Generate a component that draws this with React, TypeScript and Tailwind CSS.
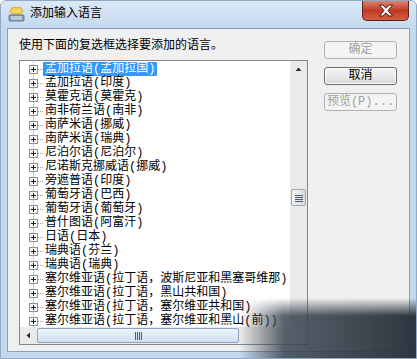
import React from "react"

const items = [
  "孟加拉语(孟加拉国)",
  "孟加拉语(印度)",
  "莫霍克语(莫霍克)",
  "南非荷兰语(南非)",
  "南萨米语(挪威)",
  "南萨米语(瑞典)",
  "尼泊尔语(尼泊尔)",
  "尼诺斯克挪威语(挪威)",
  "旁遮普语(印度)",
  "葡萄牙语(巴西)",
  "葡萄牙语(葡萄牙)",
  "普什图语(阿富汗)",
  "日语(日本)",
  "瑞典语(芬兰)",
  "瑞典语(瑞典)",
  "塞尔维亚语(拉丁语，波斯尼亚和黑塞哥维那)",
  "塞尔维亚语(拉丁语，黑山共和国)",
  "塞尔维亚语(拉丁语，塞尔维亚共和国)",
  "塞尔维亚语(拉丁语，塞尔维亚和黑山(前))"
]

const font = "font-['Liberation_Mono','Noto_Sans_CJK_SC',sans-serif]"

const TreeLines = () => (
  <svg width="23" height="14" className="shrink-0">
    <line x1="13.5" y1="0" x2="13.5" y2="14" stroke="#a0a0a0" strokeDasharray="1 1" />
    <line x1="18" y1="7.5" x2="23" y2="7.5" stroke="#a0a0a0" strokeDasharray="1 1" />
    <rect x="9.5" y="3.5" width="8" height="8" fill="#f7f7f7" stroke="#919191" />
    <line x1="11" y1="7.5" x2="16" y2="7.5" stroke="#1e1e1e" />
    <line x1="13.5" y1="5" x2="13.5" y2="10" stroke="#1e1e1e" />
  </svg>
)

const TitleIcon = () => (
  <svg width="17" height="16" viewBox="0 0 17 16">
    <path d="M3 3 Q6 0 9 2 Q13 0 14 4 Q16 6 13 8 L5 8 Q1 7 3 3 Z" fill="#f7d35a" stroke="#c79a1f" strokeWidth="0.8" />
    <rect x="1" y="9" width="15" height="6" rx="1" fill="#8aa2bd" stroke="#4d6582" strokeWidth="0.8" />
    <rect x="3" y="10.5" width="11" height="1" fill="#e5edf6" />
    <rect x="3" y="12.5" width="11" height="1" fill="#e5edf6" />
  </svg>
)

const CloseButton = () => (
  <div className="mr-[7px] flex h-[20px] w-[47px] items-center justify-center self-start rounded-b-[5px] border border-t-0 border-[#5e241c] bg-gradient-to-b from-[#d98470] via-[#c03822] to-[#d0603f]">
    <svg width="16" height="13" viewBox="0 0 16 13">
      <path
        d="M1.5 1 L5 1 L8 4.2 L11 1 L14.5 1 L10 6.5 L14.5 12 L11 12 L8 8.8 L5 12 L1.5 12 L6 6.5 Z"
        fill="#ffffff"
        stroke="#4e1b14"
        strokeWidth="1"
      />
    </svg>
  </div>
)

const Arrow = ({ dir }: { dir: "up" | "left" }) => (
  <svg width="7" height="7" viewBox="0 0 7 7">
    {dir === "up" ? <path d="M0.5 5 L3.5 1.5 L6.5 5 Z" fill="#2b2b2b" /> : <path d="M5 0.5 L1.5 3.5 L5 6.5 Z" fill="#2b2b2b" />}
  </svg>
)

const VGrip = () => (
  <svg width="8" height="8" viewBox="0 0 8 8">
    <line x1="0" y1="1.5" x2="8" y2="1.5" stroke="#4c5b6e" />
    <line x1="0" y1="3.5" x2="8" y2="3.5" stroke="#4c5b6e" />
    <line x1="0" y1="5.5" x2="8" y2="5.5" stroke="#4c5b6e" />
    <line x1="0" y1="7.5" x2="8" y2="7.5" stroke="#4c5b6e" />
  </svg>
)

const HGrip = () => (
  <svg width="8" height="8" viewBox="0 0 8 8">
    <line x1="1.5" y1="0" x2="1.5" y2="8" stroke="#4c5b6e" />
    <line x1="3.5" y1="0" x2="3.5" y2="8" stroke="#4c5b6e" />
    <line x1="5.5" y1="0" x2="5.5" y2="8" stroke="#4c5b6e" />
    <line x1="7.5" y1="0" x2="7.5" y2="8" stroke="#4c5b6e" />
  </svg>
)

const App: React.FC = () => {
  return (
    <div className={`relative flex h-[359px] w-[417px] flex-col overflow-hidden rounded-t-[6px] border border-[#8fa9c6] bg-[#c4d8ee] text-[12px] ${font}`}>
      {/* title bar */}
      <div className="flex h-[27px] shrink-0 items-start justify-between bg-gradient-to-b from-[#dbe8f6] to-[#c4d8ee]">
        <div className="flex items-center gap-[5px] pl-[7px] pt-[5px]">
          <TitleIcon />
          <span className="text-[12px] leading-[16px] text-black">添加输入语言</span>
        </div>
        <CloseButton />
      </div>

      {/* client area */}
      <div className="mx-[6px] mb-[6px] flex flex-1 border border-[#8d9fb4] bg-[#f0f0f0]">
        <div className="flex flex-col pl-[11px] pt-[10px]">
          <div className="h-[14px] leading-[14px] text-black">使用下面的复选框选择要添加的语言。</div>
          <div className="mt-[7px] flex h-[285px] w-[289px] flex-col border border-[#828790] bg-white">
            <div className="flex min-h-0 flex-1">
              <div className="flex min-w-0 flex-1 flex-col overflow-hidden pt-[1px]">
                {items.map((item, i) => (
                  <div key={item} className="flex h-[14px] shrink-0 items-center whitespace-nowrap">
                    <TreeLines />
                    <span
                      className={
                        i === 0
                          ? "bg-[#3399ff] px-[2px] leading-[14px] text-white"
                          : "px-[2px] leading-[14px] text-black"
                      }
                    >
                      {item}
                    </span>
                  </div>
                ))}
              </div>
              {/* vertical scrollbar */}
              <div className="flex w-[17px] shrink-0 flex-col bg-[#eaeaea]">
                <div className="flex h-[17px] items-center justify-center">
                  <Arrow dir="up" />
                </div>
                <div className="h-[111px]" />
                <div className="mx-[1px] flex h-[17px] items-center justify-center rounded-[2px] border border-[#9aa8b8] bg-gradient-to-r from-[#f3f3f3] to-[#dcdcdc]">
                  <VGrip />
                </div>
              </div>
            </div>
            {/* horizontal scrollbar */}
            <div className="flex h-[17px] shrink-0">
              <div className="flex flex-1 items-center bg-[#eaeaea]">
                <div className="flex h-[17px] w-[17px] items-center justify-center">
                  <Arrow dir="left" />
                </div>
                <div className="flex h-[15px] w-[202px] items-center justify-center rounded-[2px] border border-[#8ba6c6] bg-gradient-to-b from-[#eef4fb] to-[#cfdff0]">
                  <HGrip />
                </div>
              </div>
              <div className="w-[17px] bg-[#f0f0f0]" />
            </div>
          </div>
        </div>

        {/* buttons */}
        <div className="ml-[16px] flex flex-col gap-[8px] pt-[12px]">
          <div className="flex h-[18px] w-[73px] items-center justify-center rounded-[3px] border border-[#adb2b5] bg-[#f4f4f4] text-[#a0a0a0]">
            确定
          </div>
          <div className="flex h-[18px] w-[73px] items-center justify-center rounded-[3px] border border-[#6f6f6f] bg-gradient-to-b from-[#f4f4f4] via-[#ebebeb] to-[#d6d6d6] text-black shadow-[inset_0_0_0_1px_#fbfbfb]">
            取消
          </div>
          <div className="flex h-[18px] w-[73px] items-center justify-center rounded-[3px] border border-[#adb2b5] bg-[#f4f4f4] text-[#a0a0a0]">
            预览(P)...
          </div>
        </div>
      </div>

      {/* blurred smudge at bottom right */}
      <div className="pointer-events-none absolute bottom-0 right-0 h-[60px] w-[176px] bg-[linear-gradient(to_right,rgba(70,80,92,0)_0%,rgba(60,70,82,0.85)_25%,rgba(40,48,58,0.97)_100%)] [mask-image:linear-gradient(to_bottom,transparent_0%,black_30%)]" />
    </div>
  )
}

export default App
